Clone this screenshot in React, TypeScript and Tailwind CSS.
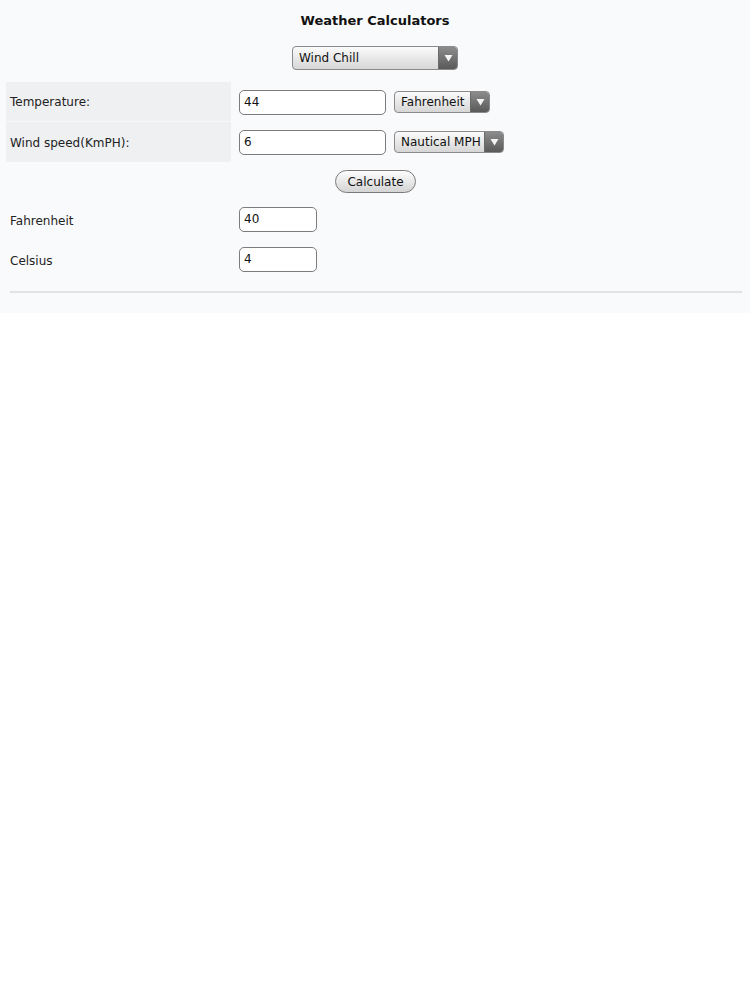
import { useState } from "react"

// small select look-alike with the dark arrow box on the right
function FakeSelect({ value, className }: { value: string; className: string }) {
  return (
    <div
      className={`flex items-stretch rounded-[4px] border border-[#8a8a8a] overflow-hidden bg-gradient-to-b from-[#fbfbfb] to-[#d6d6d6] ${className}`}
    >
      <span className="flex-1 flex items-center pl-[6px] text-[12px] text-[#111] whitespace-nowrap">{value}</span>
      <span className="w-[19px] flex items-center justify-center bg-gradient-to-b from-[#8c8c8c] to-[#5a5a5a] border-l border-[#6a6a6a]">
        <svg width="9" height="8" viewBox="0 0 9 8">
          <path d="M0.5 1 L8.5 1 L4.5 7.5 Z" fill="#f4f4f4" />
        </svg>
      </span>
    </div>
  )
}

function Field({ value, className }: { value: string; className: string }) {
  return (
    <input
      readOnly
      value={value}
      className={`h-[25px] rounded-[5px] border border-[#7c7c7c] bg-white px-[4px] text-[12px] text-[#111] outline-none ${className}`}
    />
  )
}

export default function App() {
  const [temp] = useState("44")
  const [wind] = useState("6")

  return (
    <div className="min-h-screen bg-white font-['DejaVu_Sans',sans-serif] text-[12px] text-[#222]">
      <div className="bg-[#f9fafc] pt-[12px] pb-[20px]">
        <h1 className="text-center text-[13px] font-bold text-[#111] leading-[18px]">Weather Calculators</h1>

        <div className="flex justify-center mt-[16px]">
          <FakeSelect value="Wind Chill" className="w-[166px] h-[24px]" />
        </div>

        <div className="flex mt-[12px] px-[6px]">
          <div className="w-[225px] bg-[#eff0f2]">
            <div className="h-[40px] flex items-center pl-[4px] pt-[1px] border-b border-[#f8f8f9]">Temperature:</div>
            <div className="h-[40px] flex items-center pl-[4px] pt-[1px]">Wind speed(KmPH):</div>
          </div>
          <div className="ml-[8px] flex flex-col">
            <div className="h-[40px] flex items-center gap-[8px]">
              <Field value={temp} className="w-[147px]" />
              <FakeSelect value="Fahrenheit" className="w-[96px] h-[22px]" />
            </div>
            <div className="h-[40px] flex items-center gap-[8px]">
              <Field value={wind} className="w-[147px]" />
              <FakeSelect value="Nautical MPH" className="w-[110px] h-[22px]" />
            </div>
          </div>
        </div>

        <div className="flex justify-center mt-[8px] pl-[1px]">
          <button className="h-[23px] w-[81px] rounded-full border border-[#7a7a7a] bg-gradient-to-b from-[#fdfdfd] to-[#d4d4d4] text-[12px] text-[#111]">
            Calculate
          </button>
        </div>

        <div className="mt-[6px] px-[10px]">
          <div className="h-[40px] flex items-center">
            <span className="w-[229px] pt-[4px]">Fahrenheit</span>
            <Field value="40" className="w-[78px]" />
          </div>
          <div className="h-[40px] flex items-center">
            <span className="w-[229px] pt-[4px]">Celsius</span>
            <Field value="4" className="w-[78px]" />
          </div>
          <hr className="mt-[12px] border-0 h-[2px] bg-[#e2e3e6] mr-[-2px]" />
        </div>
      </div>
    </div>
  )
}
